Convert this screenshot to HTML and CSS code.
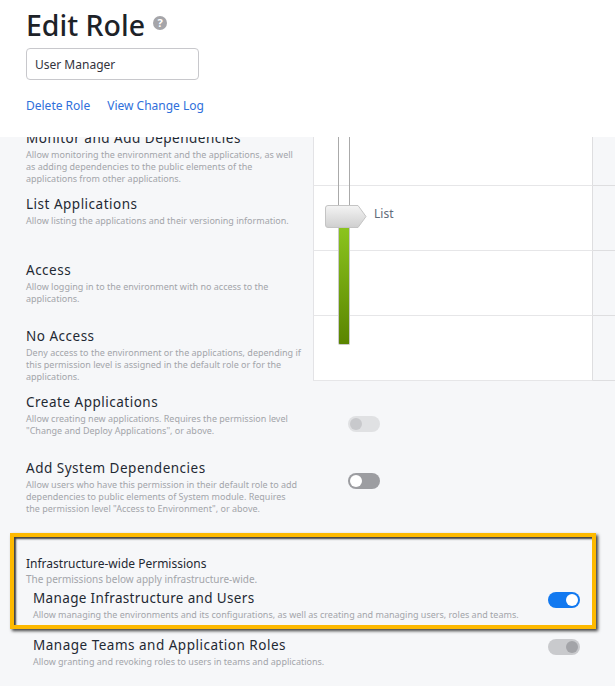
FILE: index.html
```html
<!DOCTYPE html>
<html>
<head lang="en">
    <meta charset="UTF-8">
    <title>Edit Role</title>
    <link rel="stylesheet" href="styles.css">
</head>
<body>
    <div class="page">
        <!--header-->
        <div class="header">
            <div class="heading">
                <h1>Edit Role</h1>
                <span class="help">?</span>
            </div>
            <input class="role-name" type="text" value="User Manager">
            <div class="links">
                <a href="#">Delete Role</a>
                <a href="#">View Change Log</a>
            </div>
        </div>

        <div class="content">
            <!--permission levels-->
            <div class="levels">
                <div class="level-text">
                    <div class="level">
                        <h3>Monitor and Add Dependencies</h3>
                        <p>Allow monitoring the environment and the applications, as well as adding dependencies to the public elements of the applications from other applications.</p>
                    </div>
                    <div class="level">
                        <h3>List Applications</h3>
                        <p>Allow listing the applications and their versioning information.</p>
                    </div>
                    <div class="level">
                        <h3>Access</h3>
                        <p>Allow logging in to the environment with no access to the applications.</p>
                    </div>
                    <div class="level">
                        <h3>No Access</h3>
                        <p>Deny access to the environment or the applications, depending if this permission level is assigned in the default role or for the applications.</p>
                    </div>
                </div>
                <div class="level-table">
                    <div class="cell"></div><div class="side"></div>
                    <div class="cell"></div><div class="side"></div>
                    <div class="cell"></div><div class="side"></div>
                    <div class="cell"></div><div class="side"></div>
                    <div class="rail"></div>
                    <div class="fill"></div>
                    <svg class="thumb" width="42" height="24" viewBox="0 0 42 24">
                        <defs>
                            <linearGradient id="thumbfill" x1="0" y1="0" x2="0" y2="1">
                                <stop offset="0" stop-color="#f4f4f4"/>
                                <stop offset="1" stop-color="#cfcfcf"/>
                            </linearGradient>
                        </defs>
                        <path d="M3 .5H33L41 11.5L33 22.5H3Q.5 22.5 .5 20V3Q.5 .5 3 .5Z" fill="url(#thumbfill)" stroke="#c4c4c4"/>
                    </svg>
                    <span class="thumb-label">List</span>
                </div>
            </div>

            <!--single permissions-->
            <div class="perm perm-create">
                <div class="perm-text">
                    <h3>Create Applications</h3>
                    <p>Allow creating new applications. Requires the permission level "Change and Deploy Applications", or above.</p>
                </div>
                <span class="toggle disabled"></span>
            </div>
            <div class="perm perm-system">
                <div class="perm-text">
                    <h3>Add System Dependencies</h3>
                    <p>Allow users who have this permission in their default role to add dependencies to public elements of System module. Requires the permission level "Access to Environment", or above.</p>
                </div>
                <span class="toggle off"></span>
            </div>

            <!--infrastructure-->
            <div class="infra">
                <h4>Infrastructure-wide Permissions</h4>
                <p class="infra-note">The permissions below apply infrastructure-wide.</p>
                <div class="infra-row">
                    <div>
                        <h3>Manage Infrastructure and Users</h3>
                        <p>Allow managing the environments and its configurations, as well as creating and managing users, roles and teams.</p>
                    </div>
                    <span class="toggle on"></span>
                </div>
            </div>
            <div class="infra-row below">
                <div>
                    <h3>Manage Teams and Application Roles</h3>
                    <p>Allow granting and revoking roles to users in teams and applications.</p>
                </div>
                <span class="toggle locked"></span>
            </div>
        </div>
    </div>
</body>
</html>
```

FILE: styles.css
```css
* {
    padding: 0;
    margin: 0;
    box-sizing: border-box;
}

body {
    background: #f6f7f9;
    font-family: "Noto Sans", sans-serif;
    color: #1f2933;
}

.page {
    width: 615px;
    height: 686px;
    overflow: hidden;
}

/* header */
.header {
    position: relative;
    z-index: 2;
    height: 137px;
    padding: 6px 26px 0;
    background: #fff;
}

.heading {
    display: flex;
    align-items: center;
    height: 38px;
}

h1 {
    font-size: 28.5px;
    line-height: 38px;
    font-weight: 500;
    color: #1d2228;
}

.help {
    width: 14px;
    height: 14px;
    margin: 0 0 4px 8px;
    border-radius: 50%;
    background: #a5a5a9;
    color: #fff;
    font-size: 11px;
    font-weight: 700;
    line-height: 14px;
    text-align: center;
}

.role-name {
    display: block;
    width: 173px;
    height: 32px;
    margin-top: 4px;
    padding: 0 8px;
    border: 1px solid #c8c8cc;
    border-radius: 4px;
    background: #fff;
    font-family: inherit;
    font-size: 12px;
    color: #33333d;
}

.links {
    display: flex;
    gap: 17px;
    margin-top: 17px;
    font-size: 12px;
    line-height: 17px;
}

.links a {
    color: #2f6fdb;
    text-decoration: none;
}

/* text shared by the rows */
h3 {
    margin-bottom: 1px;
    font-size: 13.5px;
    line-height: 20px;
    font-weight: 400;
    letter-spacing: .5px;
    color: #1f2933;
}

p {
    font-size: 9px;
    line-height: 12px;
    color: #a3a5aa;
}

/* levels */
.content {
    margin-top: -16px;
}

.levels {
    display: flex;
    height: 260px;
}

.level-text {
    width: 313px;
    margin-top: -1px;
    padding-left: 26px;
}

.level {
    height: 66px;
    width: 275.5px;
    padding-top: 8px;
}

.level-table {
    position: relative;
    flex: 1;
    display: grid;
    grid-template-columns: 280px 1fr;
    grid-auto-rows: 65px;
}

.cell {
    background: #fff;
    border-left: 1px solid #e3e3e6;
    border-bottom: 1px solid #e6e6e8;
    border-right: 1px solid #dedee0;
}

.side {
    border-bottom: 1px solid #dedee0;
}

.rail {
    position: absolute;
    left: 25px;
    top: 0;
    width: 12px;
    height: 85px;
    border-left: 1px solid #aaa;
    border-right: 1px solid #aaa;
}

.fill {
    position: absolute;
    left: 25px;
    top: 107px;
    width: 12px;
    height: 117px;
    border: 1px solid #c9c9c9;
    border-top: 0;
    border-radius: 0 0 2px 2px;
    background: linear-gradient(#8bc41e, #5a8400);
}

.thumb {
    position: absolute;
    left: 12px;
    top: 84px;
}

.thumb-label {
    position: absolute;
    left: 61px;
    top: 84px;
    font-size: 12px;
    line-height: 17px;
    color: #5f6b7a;
}

/* permissions */
.perm {
    display: flex;
    justify-content: space-between;
    padding-left: 26px;
}

.perm-text {
    width: 275.5px;
}

.perm-create {
    height: 66px;
    margin-top: 11px;
}

.perm-system {
    height: 75px;
}

.perm-create .toggle {
    margin: 24px 235px 0 0;
}

.perm-system .toggle {
    margin: 15px 235px 0 0;
}

.toggle {
    position: relative;
    display: block;
    flex: none;
    width: 32px;
    height: 16px;
    border-radius: 8px;
}

.toggle::after {
    content: "";
    position: absolute;
    top: 2px;
    width: 12px;
    height: 12px;
    border-radius: 50%;
}

.toggle.disabled {
    background: #e0e1e3;
}

.toggle.disabled::after {
    left: 2px;
    background: #c8c9cc;
}

.toggle.off {
    background: #9c9da1;
}

.toggle.off::after {
    left: 2px;
    background: #fff;
}

.toggle.on {
    background: #1279f0;
}

.toggle.on::after {
    right: 2px;
    background: #fff;
}

.toggle.locked {
    background: #c9cacd;
}

.toggle.locked::after {
    right: 2px;
    background: #a3a4a8;
}

/* infrastructure */
.infra {
    width: 586px;
    height: 96px;
    margin-left: 10px;
    padding: 18px 0 0 12px;
    border: 4px solid #fdb900;
    box-shadow: 2px 2px 3px rgba(0, 0, 0, .75), inset 2px 2px 2px rgba(0, 0, 0, .75);
}

h4 {
    font-size: 12px;
    line-height: 17px;
    font-weight: 400;
    color: #1f2933;
}

.infra-note {
    font-size: 10px;
    line-height: 15px;
}

.infra-row {
    display: flex;
    justify-content: space-between;
    padding-left: 7px;
}

.infra .infra-row {
    height: 36px;
    margin-top: 1px;
    padding-right: 12px;
}

.infra .infra-row h3 {
    letter-spacing: .35px;
}

.infra-row .toggle {
    margin-top: 4px;
}

.infra-row.below {
    margin: 6px 0 0 26px;
    width: 554px;
}
```
